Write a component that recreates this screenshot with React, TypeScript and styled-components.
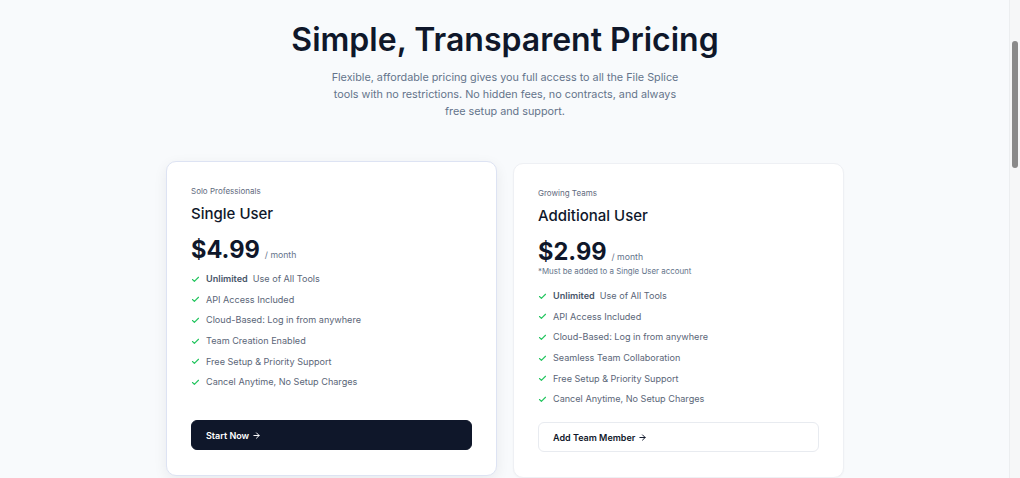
import React from 'react'
import styled, { createGlobalStyle } from 'styled-components'
import { Check, ArrowRight } from 'lucide-react'

const GlobalStyle = createGlobalStyle`
  body {
    margin: 0;
    background: #f8fafc;
    font-family: Inter, "Noto Sans", "Liberation Sans", sans-serif;
    color: #0f172a;
    -webkit-font-smoothing: antialiased;
  }
`

const Page = styled.main`
  padding: 19px 10px 60px 0;
  display: flex;
  flex-direction: column;
  align-items: center;
`

// stands in for the browser scrollbar seen in the screenshot
const ScrollTrack = styled.div`
  position: fixed;
  top: 0;
  right: 0;
  width: 10px;
  height: 100vh;
  background: #f6f7f8;
  border-left: 1px solid #eceef0;
`

const ScrollThumb = styled.div`
  position: absolute;
  top: 41px;
  left: 2px;
  width: 6px;
  height: 127px;
  border-radius: 3px;
  background: #8a8a8a;
`

const Heading = styled.h1`
  margin: 0;
  font-size: 32px;
  line-height: 42px;
  font-weight: 600;
  color: #0f172a;
`

const Lead = styled.p`
  margin: 8px 0 0;
  max-width: 360px;
  text-align: center;
  font-size: 10.8px;
  line-height: 17px;
  color: #64748b;
`

const Plans = styled.div`
  margin-top: 43px;
  display: grid;
  grid-template-columns: 331px 331px;
  gap: 16px;
`

const Card = styled.section<{ $featured?: boolean }>`
  display: flex;
  flex-direction: column;
  padding: 23px 24px 25px;
  background: #fff;
  border-radius: 10px;
  border: 1px solid ${p => (p.$featured ? '#dde3f3' : '#eef0f4')};
  box-shadow: ${p => (p.$featured ? '0 4px 14px rgba(15, 23, 42, 0.07)' : '0 1px 2px rgba(15, 23, 42, 0.03)')};
  transform: ${p => (p.$featured ? 'translateY(-2px)' : 'none')};
`

const Eyebrow = styled.div`
  font-size: 8px;
  line-height: 12px;
  color: #5f6b7e;
`

const PlanName = styled.h2`
  margin: 6px 0 0;
  font-size: 15px;
  line-height: 22px;
  font-weight: 500;
  color: #0f172a;
`

const PriceRow = styled.div`
  margin-top: 10px;
  display: flex;
  align-items: baseline;
  gap: 5px;
`

const Amount = styled.span`
  font-size: 23.6px;
  line-height: 30px;
  font-weight: 700;
  color: #0f172a;
`

const Per = styled.span`
  font-size: 8.7px;
  color: #64748b;
`

const Note = styled.div`
  font-size: 7.9px;
  line-height: 12px;
  color: #64748b;
  margin: -2px 0 5px;
`

const Features = styled.ul`
  list-style: none;
  margin: 7px 0 0;
  padding: 0;
  display: flex;
  flex-direction: column;
  gap: 6.7px;
`

const Feature = styled.li`
  display: flex;
  align-items: center;
  gap: 6px;
  font-size: 9.1px;
  line-height: 14px;
  color: #5b6678;

  svg {
    flex-shrink: 0;
    color: #22c55e;
  }

  strong {
    font-weight: 600;
    color: #475569;
    margin-right: 5px;
  }
`

const ActionWrap = styled.div`
  margin-top: auto;
  padding-top: 16px;
`

const Action = styled.button<{ $primary?: boolean }>`
  width: 100%;
  height: 30px;
  display: flex;
  align-items: center;
  gap: 3px;
  padding: 0 14px;
  border-radius: 6px;
  font-family: inherit;
  font-size: 9px;
  font-weight: 600;
  cursor: pointer;
  background: ${p => (p.$primary ? '#0f172a' : '#fff')};
  color: ${p => (p.$primary ? '#fff' : '#0f172a')};
  border: 1px solid ${p => (p.$primary ? '#0f172a' : '#e8ebf0')};
`

type Plan = {
  eyebrow: string
  name: string
  price: string
  note?: string
  features: string[]
  cta: string
  featured?: boolean
}

const plans: Plan[] = [
  {
    eyebrow: 'Solo Professionals',
    name: 'Single User',
    price: '$4.99',
    features: [
      'API Access Included',
      'Cloud-Based: Log in from anywhere',
      'Team Creation Enabled',
      'Free Setup & Priority Support',
      'Cancel Anytime, No Setup Charges',
    ],
    cta: 'Start Now',
    featured: true,
  },
  {
    eyebrow: 'Growing Teams',
    name: 'Additional User',
    price: '$2.99',
    note: '*Must be added to a Single User account',
    features: [
      'API Access Included',
      'Cloud-Based: Log in from anywhere',
      'Seamless Team Collaboration',
      'Free Setup & Priority Support',
      'Cancel Anytime, No Setup Charges',
    ],
    cta: 'Add Team Member',
  },
]

const PricingCard = ({ plan }: { plan: Plan }) => (
  <Card $featured={plan.featured}>
    <Eyebrow>{plan.eyebrow}</Eyebrow>
    <PlanName>{plan.name}</PlanName>
    <PriceRow>
      <Amount>{plan.price}</Amount>
      <Per>/ month</Per>
    </PriceRow>
    {plan.note && <Note>{plan.note}</Note>}
    <Features>
      <Feature>
        <Check size={9} strokeWidth={3} />
        <span><strong>Unlimited</strong>Use of All Tools</span>
      </Feature>
      {plan.features.map((f, i) => (
        <Feature key={`feature_${i + 1}`}>
          <Check size={9} strokeWidth={3} />
          <span>{f}</span>
        </Feature>
      ))}
    </Features>
    <ActionWrap>
      <Action $primary={plan.featured}>
        {plan.cta}
        <ArrowRight size={9} strokeWidth={2.6} />
      </Action>
    </ActionWrap>
  </Card>
)

const App = () => (
  <>
    <GlobalStyle />
    <Page>
      <Heading>Simple, Transparent Pricing</Heading>
      <Lead>
        Flexible, affordable pricing gives you full access to all the File Splice
        tools with no restrictions. No hidden fees, no contracts, and always
        free setup and support.
      </Lead>
      <Plans>
        {plans.map(p => <PricingCard key={p.name} plan={p} />)}
      </Plans>
    </Page>
    <ScrollTrack>
      <ScrollThumb />
    </ScrollTrack>
  </>
)

export default App
